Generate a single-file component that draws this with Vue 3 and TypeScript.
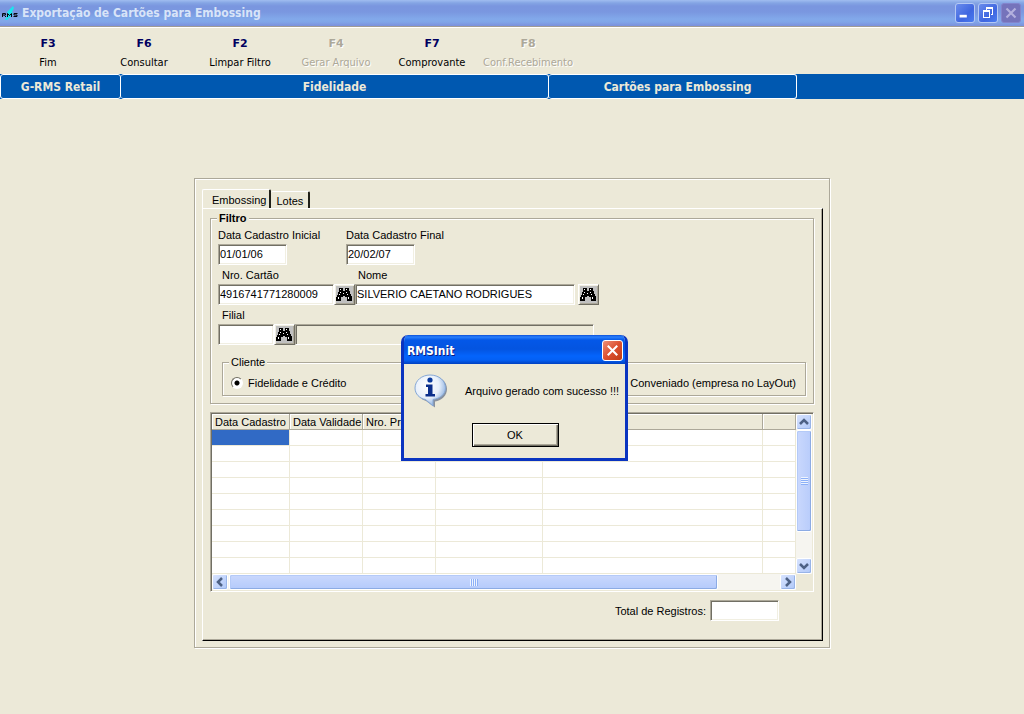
<script setup lang="ts">
import { ref } from 'vue'

interface Action {
  key: string
  label: string
  disabled?: boolean
}

const actions: Action[] = [
  { key: 'F3', label: 'Fim' },
  { key: 'F6', label: 'Consultar' },
  { key: 'F2', label: 'Limpar Filtro' },
  { key: 'F4', label: 'Gerar Arquivo', disabled: true },
  { key: 'F7', label: 'Comprovante' },
  { key: 'F8', label: 'Conf.Recebimento', disabled: true },
]

const columns: string[] = ['Data Cadastro', 'Data Validade', 'Nro. Pro', '', '', '']
const rowCount = 9

const startDate = ref('01/01/06')
const endDate = ref('20/02/07')
const card = ref('4916741771280009')
const holder = ref('SILVERIO CAETANO RODRIGUES')
const branch = ref('')
const branchName = ref('')
const clientType = ref('credito')
const total = ref('')
</script>

<template>
  <div class="window">
    <header class="titlebar">
      <svg class="logo" viewBox="0 0 18 18" aria-hidden="true">
        <path d="M12 2l-6 6 1 2-3 6h2l6-6-1-2 2-4z" fill="#19e6ee" />
        <path d="M1.500 13V9.500h3v1.500h-3M3.500 11.500l1.500 1.500M6.500 13V9.500l2 2 2-2V13M16.500 9.500H13V11h3v1.500h-3.500" fill="none" stroke="#05080f" stroke-width="1" />
      </svg>
      <h1>Exportação de Cartões para Embossing</h1>
      <div class="window-buttons">
        <button type="button" aria-label="Minimizar">
          <svg viewBox="0 0 20 20"><path d="M4 12h8v3H4z" fill="#fff" /></svg>
        </button>
        <button type="button" aria-label="Restaurar">
          <svg viewBox="0 0 18 18" shape-rendering="crispEdges"><path d="M7 3h7v2H7zM13 5h1v6h-2v-1h1zM4 6h7v2H4zM4 8h1v5H4zM10 8h1v5h-1zM4 13h7v1H4zM7 5h1v1H7z" fill="#fff" /></svg>
        </button>
        <button type="button" class="off" aria-label="Fechar" disabled>
          <svg viewBox="0 0 20 20"><path d="M5 5l10 10M15 5L5 15" stroke="#b3b0de" stroke-width="2.400" /></svg>
        </button>
      </div>
    </header>

    <nav class="toolbar">
      <button v-for="a in actions" :key="a.key" type="button" :disabled="a.disabled">
        <b>{{ a.key }}</b>
        <span>{{ a.label }}</span>
      </button>
    </nav>

    <div class="band">
      <span>G-RMS Retail</span>
      <span>Fidelidade</span>
      <span>Cartões para Embossing</span>
    </div>

    <main class="frame">
      <div class="tabs" role="tablist">
        <button type="button" role="tab" class="tab active" aria-selected="true">Embossing</button>
        <button type="button" role="tab" class="tab" aria-selected="false">Lotes</button>
      </div>
      <section class="pane">
        <fieldset class="filter">
          <legend>Filtro</legend>
          <div class="row dates">
            <div class="field date">
              <label for="start">Data Cadastro Inicial</label>
              <input id="start" v-model="startDate" type="text" />
            </div>
            <div class="field date">
              <label for="end">Data Cadastro Final</label>
              <input id="end" v-model="endDate" type="text" />
            </div>
          </div>
          <div class="row">
            <div class="field indent card">
              <label for="card">Nro. Cartão</label>
              <input id="card" v-model="card" type="text" />
            </div>
            <button type="button" class="find" aria-label="Procurar cartão">
              <svg viewBox="0 0 16 16"><use href="#binoculars" /></svg>
            </button>
            <div class="field name">
              <label for="holder">Nome</label>
              <input id="holder" v-model="holder" type="text" />
            </div>
            <button type="button" class="find spaced" aria-label="Procurar nome">
              <svg viewBox="0 0 16 16"><use href="#binoculars" /></svg>
            </button>
          </div>
          <div class="row">
            <div class="field indent branch">
              <label for="branch">Filial</label>
              <input id="branch" v-model="branch" type="text" />
            </div>
            <button type="button" class="find" aria-label="Procurar filial">
              <svg viewBox="0 0 16 16">
                <g id="binoculars" shape-rendering="crispEdges">
                  <path d="M3 1h4v3h2V1h4v3l1 1v2l1 1v1l1 1v4h-5v-4H9V9H7v1H5v4H0v-4l1-1V8l1-1V5l1-1z" fill="#000" />
                  <path d="M4 2h1v1H4zM10 2h1v1h-1zM4 5h1v1H4zM3 7h1v1H3zM10 5h1v1h-1zM2 10h1v2H2zM7 6h1v1H7zM11 7h1v1h-1zM12 10h1v2h-1z" fill="#fff" />
                </g>
              </svg>
            </button>
            <input v-model="branchName" class="branch-name" type="text" aria-label="Nome da filial" readonly />
          </div>
          <fieldset class="client">
            <legend>Cliente</legend>
            <label><input v-model="clientType" type="radio" name="client" value="credito" />Fidelidade e Crédito</label>
            <label><input v-model="clientType" type="radio" name="client" value="conveniado" />Conveniado (empresa no LayOut)</label>
          </fieldset>
        </fieldset>

        <div class="grid">
          <table>
            <colgroup>
              <col class="c1" /><col class="c2" /><col class="c2" /><col class="c4" /><col class="c5" /><col />
            </colgroup>
            <thead>
              <tr><th v-for="(c, i) in columns" :key="i" scope="col">{{ c }}</th></tr>
            </thead>
            <tbody>
              <tr v-for="r in rowCount" :key="r">
                <td v-for="(c, i) in columns" :key="i" :class="{ selected: r === 1 && i === 0 }"></td>
              </tr>
            </tbody>
          </table>
          <div class="vbar">
            <button type="button" aria-label="Rolar para cima"><svg viewBox="0 0 14 14"><path d="M3 9l4-4 4 4" /></svg></button>
            <div class="thumb"><i></i></div>
            <span class="track"></span>
            <button type="button" aria-label="Rolar para baixo"><svg viewBox="0 0 14 14"><path d="M3 5l4 4 4-4" /></svg></button>
          </div>
          <div class="hbar">
            <button type="button" aria-label="Rolar para a esquerda"><svg viewBox="0 0 14 14"><path d="M9 3L5 7l4 4" /></svg></button>
            <div class="thumb"><i></i></div>
            <span class="track"></span>
            <button type="button" aria-label="Rolar para a direita"><svg viewBox="0 0 14 14"><path d="M5 3l4 4-4 4" /></svg></button>
          </div>
        </div>

        <div class="total">
          <label for="total">Total de Registros:</label>
          <input id="total" v-model="total" type="text" />
        </div>
      </section>
    </main>

    <div class="dialog" role="dialog" aria-labelledby="dialog-title">
      <div class="dialog-bar">
        <h2 id="dialog-title">RMSInit</h2>
        <button type="button" aria-label="Fechar">
          <svg viewBox="0 0 20 20"><path d="M5 5l10 10M15 5L5 15" stroke="#fff" stroke-width="2.200" /></svg>
        </button>
      </div>
      <div class="dialog-body">
        <div class="message">
          <svg viewBox="0 0 34 34" aria-hidden="true">
            <defs>
              <radialGradient id="bubble" cx="0.4" cy="0.35" r="0.65">
                <stop offset="0" stop-color="#fff" />
                <stop offset="0.6" stop-color="#e8f0fb" />
                <stop offset="1" stop-color="#8fb2e0" />
              </radialGradient>
            </defs>
            <path d="M17.500 2C9 2 3 8 3 15.500c0 6 4 10 9 11.500l9 6.500v-6c7-1 12-6 12-12.500C33 8 27 2 17.500 2z" fill="#6f7a90" opacity="0.8" />
            <path d="M16 1C8 1 1 6.500 1 14c0 6 4.500 10.500 10.500 11.500L19 32v-6.500c7.500-1 12.500-5.500 12.500-11.500C31.500 6.500 25 1 16 1z" fill="url(#bubble)" stroke="#86a8d6" />
            <circle cx="16" cy="6" r="2.600" fill="#0b3a9c" />
            <path d="M12 10.500h6.500v9.500H21v2.500h-9.500V20H14v-7h-2z" fill="#0b2f8c" />
          </svg>
          <p>Arquivo gerado com sucesso !!!</p>
        </div>
        <button type="button" class="ok">OK</button>
      </div>
    </div>
  </div>
</template>

<style>
body {
  margin: 0;
  background: #ece9d8;
}
</style>

<style scoped>
* {
  box-sizing: border-box;
}
button,
input {
  margin: 0;
  padding: 0;
  font: inherit;
  color: inherit;
  border: 0;
  border-radius: 0;
  background: none;
}
svg {
  display: block;
}
.window {
  position: relative;
  min-height: 100vh;
  background: #ece9d8;
  color: #000;
  font: 11px/14px "Liberation Sans", Arial, sans-serif;
}
.titlebar {
  display: flex;
  align-items: center;
  height: 27px;
  padding: 0 3px 1px 1px;
  border-bottom: 1px solid #a09c94;
  background: linear-gradient(#a0bdf0 0, #84a4e4 3px, #7a96df 6px, #7a97e0 12px, #82a9ea 19px, #80a5e8 22px, #7b90dc 26px);
}
.logo {
  width: 18px;
  height: 18px;
}
h1 {
  flex: 1;
  margin: 0 0 0 3px;
  color: #d8e4f8;
  font: bold 12px/18px "DejaVu Sans Condensed", "DejaVu Sans", sans-serif;
}
.window-buttons {
  display: flex;
  gap: 3px;
}
.window-buttons button {
  width: 20px;
  height: 20px;
  border: 1px solid #b4c8f4;
  border-radius: 3px;
  background: linear-gradient(135deg, #6a8cec, #3f66e0 60%, #4a7cf0);
}
.window-buttons svg {
  width: 18px;
  height: 18px;
}
.window-buttons .off {
  border-color: #8384cc;
  background: #7573bb;
}
.toolbar {
  display: flex;
  padding: 8px 0 3px;
  border-top: 1px solid #fff;
}
.toolbar button {
  display: flex;
  flex-direction: column;
  align-items: center;
  gap: 3px;
  width: 96px;
  font: 11px/16px "DejaVu Sans Condensed", Tahoma, sans-serif;
  white-space: nowrap;
}
.toolbar b {
  color: #000060;
  font-family: "DejaVu Sans", Verdana, sans-serif;
}
.toolbar button:disabled,
.toolbar button:disabled b {
  color: #aca899;
  text-shadow: 1px 1px #fff;
}
.band {
  display: grid;
  grid-template-columns: 121fr 428fr 248fr 227fr;
  background: #0058b0;
}
.band span {
  height: 25px;
  border: 1px solid #fff;
  border-left-width: 0;
  border-radius: 3px;
  color: #ece9d8;
  font: bold 12px/24px "DejaVu Sans Condensed", Verdana, sans-serif;
  text-align: center;
}
.band span:first-child {
  border-left-width: 1px;
}
.band span:last-child {
  padding-left: 10px;
}
.frame {
  width: 100%;
  max-width: 636px;
  margin: 79px auto 0;
  padding: 10px 6px 6px 7px;
  border: 1px solid #aca899;
  box-shadow: inset 1px 1px #fff, 1px 1px #fff;
}
.tabs {
  display: flex;
  align-items: flex-end;
}
.tab {
  height: 17px;
  padding: 1px 5px 0;
  border: solid;
  border-width: 1px 2px 0 0;
  border-color: #fff #202018 #fff #fff;
  border-radius: 2px 2px 0 0;
}
.tab.active {
  height: 19px;
  padding: 1px 3px 0 9px;
  border-left-width: 1px;
}
.pane {
  padding: 2px 8px 19px 7px;
  border: 1px solid #fff;
  border-right-color: #000;
  border-bottom-color: #000;
  box-shadow: inset -1px -1px #aca899;
}
fieldset {
  min-width: 0;
  margin: 0;
  padding: 0;
  border: 1px solid #aca899;
  box-shadow: inset 1px 1px #fff, 1px 1px #fff;
}
legend {
  padding: 0 2px;
  background: #ece9d8;
}
.filter {
  padding: 3px 7px 7px;
}
.filter > legend {
  margin-left: -1px;
  font-weight: bold;
}
.row {
  display: flex;
  align-items: flex-end;
  margin-bottom: 3px;
}
.dates {
  gap: 59px;
}
.field {
  display: flex;
  flex-direction: column;
  gap: 2px;
}
.field label {
  white-space: nowrap;
}
.indent label {
  padding-left: 4px;
}
.date {
  width: 69px;
}
.card {
  width: 116px;
}
.name {
  width: 220px;
}
.name label {
  padding-left: 3px;
}
.branch {
  width: 56px;
}
input[type="text"] {
  width: 100%;
  height: 21px;
  padding: 0 1px 2px;
  border: 1px solid;
  border-color: #aca899 #fff #fff #aca899;
  background: #fff;
  box-shadow: inset 1px 1px #716f64, inset -1px -1px #f1efe2;
}
input.branch-name {
  width: 299px;
  background: #ece9d8;
  box-shadow: inset 1px 1px #716f64;
}
.find {
  width: 21px;
  height: 21px;
  padding: 1px;
  border: 1px solid;
  border-color: #fff #716f64 #716f64 #fff;
  background: #c0c0c0;
  box-shadow: inset 1px 1px #f1efe2, inset -1px -1px #aca899;
}
.find svg {
  width: 16px;
  height: 16px;
}
.find.spaced {
  margin-left: 3px;
}
.client {
  display: flex;
  justify-content: space-between;
  margin: 10px 0 0 4px;
  padding: 7px 9px 5px 8px;
}
.client > legend {
  margin-left: -2px;
}
.client label {
  display: flex;
  align-items: center;
  gap: 5px;
}
input[type="radio"] {
  appearance: none;
  width: 12px;
  height: 12px;
  border: 1px solid;
  border-color: #716f64 #fff #fff #716f64;
  border-radius: 50%;
  background: #fff;
}
input[type="radio"]:checked {
  background: radial-gradient(circle, #000 2px, #fff 3px);
}
.grid {
  display: grid;
  grid-template-columns: 1fr 16px;
  margin-top: 8px;
  border: 1px solid;
  border-color: #aca899 #fff #fff #aca899;
  box-shadow: inset 1px 1px #716f64;
  padding: 1px;
}
table {
  width: 100%;
  table-layout: fixed;
  border-collapse: separate;
  border-spacing: 0;
  background: #fff;
}
.c1 {
  width: 78px;
}
.c2 {
  width: 73px;
}
.c4 {
  width: 107px;
}
.c5 {
  width: 220px;
}
th,
td {
  height: 16px;
  padding: 0;
  border: solid #ece9d8;
  border-width: 0 1px 1px 0;
  white-space: nowrap;
}
th {
  padding: 0 0 0 3px;
  border-color: #aca899;
  background: #ece9d8;
  box-shadow: inset 1px 1px #fff;
  font-weight: normal;
  text-align: left;
}
.selected {
  background: #316ac5;
}
.vbar,
.hbar {
  display: flex;
  background: #f6f5f0;
}
.vbar {
  flex-direction: column;
}
.hbar {
  grid-column: 1;
}
.vbar button,
.hbar button {
  width: 16px;
  height: 16px;
  flex: none;
  border: 1px solid #fff;
  border-radius: 2px;
  background: linear-gradient(135deg, #d6e2fe, #b0c8f8);
  box-shadow: inset -1px -1px #98b4e8;
}
.vbar svg,
.hbar svg {
  width: 14px;
  height: 14px;
  fill: none;
  stroke: #4d6185;
  stroke-width: 2.500;
}
.thumb {
  display: flex;
  align-items: center;
  justify-content: center;
  border: 1px solid #fff;
  border-radius: 2px;
  box-shadow: inset -1px -1px #8cabe4, inset 1px 1px #b4caf8;
}
.vbar .thumb {
  flex: 102;
  background: linear-gradient(90deg, #cad8fd, #b8ccfb);
}
.vbar .track {
  flex: 26;
}
.hbar .thumb {
  flex: 489;
  margin-left: 1px;
  background: linear-gradient(#cad8fd, #b4cafb);
}
.hbar .track {
  flex: 62;
}
.vbar i {
  width: 7px;
  height: 8px;
  background: repeating-linear-gradient(#eef4fe 0 1px, #8cb0f8 1px 2px);
}
.hbar i {
  width: 8px;
  height: 7px;
  background: repeating-linear-gradient(90deg, #eef4fe 0 1px, #8cb0f8 1px 2px);
}
.total {
  display: flex;
  align-items: center;
  justify-content: flex-end;
  gap: 4px;
  margin: 8px 35px 0 0;
}
.total input[type="text"] {
  width: 69px;
}
.dialog {
  position: absolute;
  top: 335px;
  left: calc(50% - 111px);
  width: 227px;
  border: solid #0a34c0;
  border-width: 0 3px 3px;
  border-radius: 7px 7px 0 0;
  background: #ece9d8;
  font: 11px/14px "Liberation Sans", Tahoma, sans-serif;
  overflow: hidden;
}
.dialog-bar {
  display: flex;
  align-items: center;
  justify-content: space-between;
  height: 29px;
  margin: 0 -3px;
  padding: 2px 5px 0 6px;
  background: linear-gradient(#0c50d8 0, #2a80fc 2px, #0458e8 5px, #0454e0 14px, #0464fc 21px, #0460f4 25px, #0040c0 29px);
}
h2 {
  margin: 0;
  color: #fff;
  font: bold 12px/18px "DejaVu Sans Condensed", "DejaVu Sans", sans-serif;
  text-shadow: 1px 1px #0a1c80;
}
.dialog-bar button {
  width: 21px;
  height: 21px;
  border: 1px solid #fff;
  border-radius: 3px;
  background: linear-gradient(135deg, #ee9078, #dc5030 50%, #c03c14);
}
.dialog-body {
  display: flex;
  flex-direction: column;
  align-items: center;
  padding: 10px 9px 11px 10px;
}
.message {
  display: flex;
  align-items: center;
  align-self: stretch;
  gap: 17px;
}
.message svg {
  flex: none;
  width: 34px;
  height: 34px;
}
p {
  margin: 0;
  white-space: nowrap;
}
.ok {
  width: 87px;
  height: 24px;
  margin-top: 15px;
  border: 1px solid #000;
  box-shadow: inset 1px 1px #fff, inset -1px -1px #716f64, inset -2px -2px #aca899;
}
</style>
